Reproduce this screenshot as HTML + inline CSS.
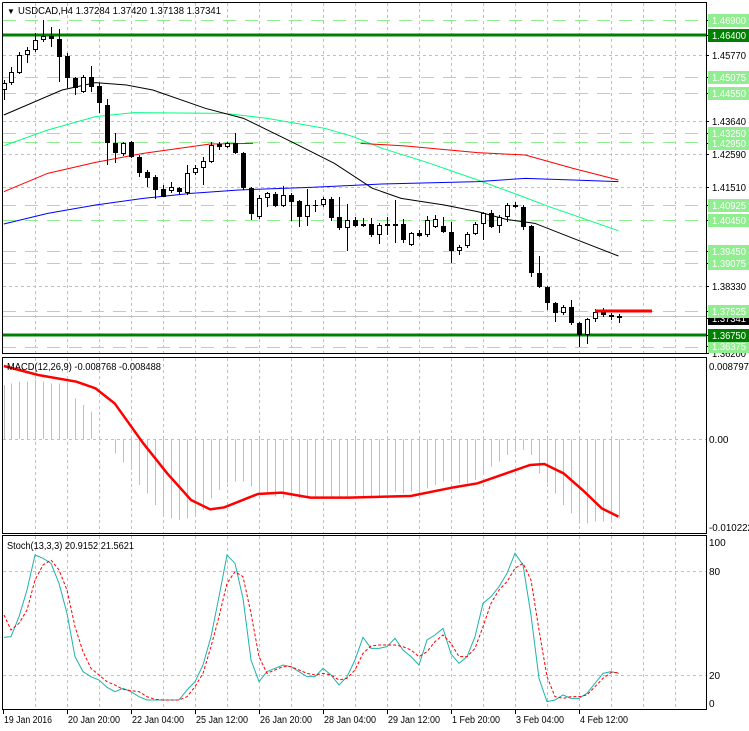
<!DOCTYPE html>
<html><head><meta charset="utf-8"><style>
html,body{margin:0;padding:0;background:#fff;width:749px;height:731px;overflow:hidden}
svg{display:block;font-family:"Liberation Sans",Tahoma,sans-serif;font-size:10px}
</style></head><body>
<svg id="c" width="749" height="731" viewBox="0 0 749 731" xmlns="http://www.w3.org/2000/svg">
<rect width="749" height="731" fill="#fff"/>
<g id="vgrid" stroke="#c0c0c0" stroke-dasharray="3,3" stroke-width="1"></g>
<g id="hgrid"></g>
<g transform="scale(0.47755,0.33333)" fill="none" stroke-width="1" >
<polyline vector-effect="non-scaling-stroke" stroke="#00ff80" stroke-width="1" points="8,437 100,390 200,350 280,338 470,340 560,355 680,385 740,410 800,445 900,490 1000,540 1080,582 1150,620 1295,692"/>
<polyline vector-effect="non-scaling-stroke" stroke="#ff0000" points="8,575 100,520 200,487 300,460 440,432 530,430"/>
<polyline vector-effect="non-scaling-stroke" stroke="#ff0000" points="755,430 850,438 1000,458 1100,465 1200,505 1295,540"/>
<polyline vector-effect="non-scaling-stroke" stroke="#0000ff" points="8,672 100,640 200,615 300,595 400,580 500,570 650,562 800,552 1000,545 1100,535 1200,540 1295,545"/>
<polyline vector-effect="non-scaling-stroke" stroke="#000" points="8,345 130,270 200,248 265,255 320,270 430,325 510,355 610,425 700,490 780,565 840,595 930,615 1000,635 1060,658 1120,670 1200,715 1295,768"/>
</g>
<g id="candles"></g>
<line x1="595" y1="311" x2="652" y2="311" stroke="#ff0000" stroke-width="3"/>
<g id="hist" stroke="#c0c0c0" stroke-width="1"></g>
<g transform="translate(0,350) scale(0.47755,0.33333)" fill="none">
<polyline vector-effect="non-scaling-stroke" stroke="#ff0000" stroke-width="2.5" points="8,48 80,75 160,95 200,115 240,160 300,280 350,370 400,450 440,478 470,472 540,432 590,428 650,443 730,443 860,438 950,412 1000,400 1060,370 1110,345 1140,342 1180,370 1220,420 1260,475 1295,500"/>
<polyline id="stm" vector-effect="non-scaling-stroke" stroke="#20b2aa" stroke-width="1"/>
<polyline id="sts" vector-effect="non-scaling-stroke" stroke="#ff0000" stroke-width="1" stroke-dasharray="3,2"/>
</g>
<g fill="none" stroke="#000" stroke-width="1">
<polyline points="2.5,2.5 706.5,2.5 706.5,353.5 2.5,353.5 2.5,2.5"/>
<rect x="2.5" y="357.5" width="704" height="176"/>
<rect x="2.5" y="535.5" width="704" height="174"/>
</g>
<g id="axis"></g>
<text x="7" y="14" fill="#000" font-size="8">▼</text>
<text x="18" y="14" fill="#000" textLength="203" lengthAdjust="spacingAndGlyphs">USDCAD,H4  1.37284 1.37420 1.37138 1.37341</text>
<text x="7" y="370" fill="#000" textLength="154" lengthAdjust="spacingAndGlyphs">MACD(12,26,9) -0.008768 -0.008488</text>
<text x="7" y="549" fill="#000" textLength="127" lengthAdjust="spacingAndGlyphs">Stoch(13,3,3) 20.9152 21.5621</text>
<g fill="#000">
<text x="709" y="370" textLength="40" lengthAdjust="spacingAndGlyphs">0.008797</text>
<text x="709" y="443">0.00</text>
<text x="709" y="531" textLength="44" lengthAdjust="spacingAndGlyphs">-0.010222</text>
<text x="709" y="546">100</text>
<text x="709" y="575">80</text>
<text x="709" y="679">20</text>
<text x="709" y="707">0</text>
</g>
</svg>
<script>
var NS="http://www.w3.org/2000/svg";
function el(p,t,a){var e=document.createElementNS(NS,t);for(var k in a)e.setAttribute(k,a[k]);p.appendChild(e);return e;}
var vg=document.getElementById('vgrid');
for(var x=35;x<706;x+=32){el(vg,'line',{x1:x+.5,y1:3,x2:x+.5,y2:353});el(vg,'line',{x1:x+.5,y1:358,x2:x+.5,y2:533});el(vg,'line',{x1:x+.5,y1:536,x2:x+.5,y2:709});}
var hg=document.getElementById('hgrid');
[55,121,154,187,286,439,571,675].forEach(function(y){el(hg,'line',{x1:3,y1:y+.5,x2:706,y2:y+.5,stroke:'#c0c0c0','stroke-dasharray':'3,3'});});
el(hg,'line',{x1:3,y1:316.5,x2:706,y2:316.5,stroke:'#c0c0c0'});
[20,77,93,133,142,205,220,251,263,311,347].forEach(function(y){el(hg,'line',{x1:3,y1:y+.5,x2:706,y2:y+.5,stroke:'#90ee90','stroke-width':1,'stroke-dasharray':'13,9'});});
[35,335].forEach(function(y){el(hg,'line',{x1:3,y1:y,x2:706,y2:y,stroke:'#008000','stroke-width':3});});
var C=[[4,'W',83,90,80,100],[11,'W',72,83,67,85],[19,'W',55,73,52,74],[27,'W',50,55,47,63],[35,'W',40,50,33,52],[43,'W',36,40,20,42],[51,'B',36,39,27,47],[59,'B',39,57,29,82],[67,'B',56,78,53,88],[75,'B',78,88,77,95],[83,'W',77,92,75,93],[91,'B',77,87,66,92],[99,'B',86,103,83,113],[107,'B',105,143,99,165],[115,'B',143,153,133,163],[123,'W',143,154,142,156],[131,'B',142,157,141,158],[139,'B',157,173,155,177],[147,'B',172,178,170,187],[155,'B',177,190,175,199],[163,'B',189,197,185,197],[171,'W',187,191,182,193],[179,'B',188,192,187,195],[187,'W',173,193,165,195],[195,'W',168,173,165,175],[203,'W',161,168,157,185],[211,'W',145,162,142,163],[219,'B',144,147,142,150],[227,'W',143,147,142,148],[235,'B',143,153,133,154],[243,'B',153,188,152,190],[251,'B',188,214,187,220],[259,'W',198,217,195,219],[267,'W',193,198,192,207],[275,'B',194,206,192,207],[283,'W',195,206,186,207],[291,'B',195,202,193,221],[299,'B',201,217,200,227],[307,'W',205,217,189,226],[315,'B',205,206,200,212],[323,'W',199,205,197,207],[331,'B',199,218,197,221],[339,'B',217,228,197,230],[347,'W',220,228,204,251],[355,'B',220,226,217,227],[363,'B',224,226,218,227],[371,'B',224,235,218,237],[379,'W',225,235,223,244],[387,'B',224,226,217,235],[395,'B',224,226,200,243],[403,'B',224,240,219,243],[411,'W',233,245,232,246],[419,'B',233,236,230,237],[427,'W',220,235,216,237],[435,'W',219,227,215,228],[443,'B',226,232,217,233],[451,'B',232,251,222,263],[459,'W',247,251,245,255],[467,'W',234,246,232,248],[475,'W',224,234,222,235],[483,'W',213,224,212,240],[491,'B',213,227,210,228],[499,'W',217,226,215,233],[507,'W',205,217,203,222],[515,'B',205,207,202,208],[523,'B',207,227,205,230],[531,'B',226,273,225,277],[539,'B',273,287,256,288],[547,'B',287,303,286,310],[555,'B',303,313,302,322],[563,'W',307,313,305,315],[571,'B',307,323,300,325],[579,'B',323,335,322,347],[587,'W',319,335,318,344],[595,'W',312,319,309,322],[603,'B',312,315,308,317],[611,'B',315,317,313,320],[619,'W',316,318,314,323]];
var cg=document.getElementById('candles');
C.forEach(function(c){var x=c[0]+.5;el(cg,'line',{x1:x,y1:c[4],x2:x,y2:c[5],stroke:'#000'});
var h=Math.max(c[3]-c[2],1);
if(c[1]=='B')el(cg,'rect',{x:c[0]-2,y:c[2],width:5,height:h,fill:'#000'});
else el(cg,'rect',{x:c[0]-1.5,y:c[2]+.5,width:4,height:Math.max(h-1,1),fill:'#fff',stroke:'#000'});});
var H=[105,100,95,95,90,95,100,100,105,145,165,185,268,268,310,338,360,405,430,465,500,505,510,505,500,480,445,420,400,395,395,410,420,430,440,445,445,445,440,445,445,440,440,440,435,440,440,440,435,425,430,425,420,415,405,395,395,400,400,390,375,350,335,315,305,300,315,370,400,430,465,490,520,520,515,515,510,505];
var hh=document.getElementById('hist');
H.forEach(function(v,i){var x=C[i][0]+.5;el(hh,'line',{x1:x,y1:439,x2:x,y2:350+v/3});});
var XS=C.map(function(c){return c[0]/0.47755;});
var SM=[862,860,800,720,615,625,640,700,790,920,965,980,990,1012,1025,1015,1025,1040,1050,1050,1050,1050,1050,1020,995,945,860,740,615,640,745,930,995,965,955,945,950,965,980,980,955,975,1005,980,930,862,895,895,890,865,900,920,945,870,855,835,912,940,920,860,760,740,710,670,610,645,795,985,1055,1050,1035,1045,1045,1030,1000,970,965,970];
var SS=[795,840,820,780,690,645,630,660,720,830,905,955,975,995,1005,1018,1022,1025,1040,1048,1050,1050,1050,1040,1010,970,890,800,700,665,680,790,920,970,960,950,950,960,970,975,970,975,990,985,960,910,888,885,885,885,890,900,920,905,875,855,880,920,920,895,830,760,720,695,655,640,690,840,980,1040,1045,1040,1040,1035,1010,985,968,968];
document.getElementById('stm').setAttribute('points',SM.map(function(v,i){return XS[i]+','+v;}).join(' '));
document.getElementById('sts').setAttribute('points',SS.map(function(v,i){return XS[i]+','+v;}).join(' '));
var ax=document.getElementById('axis');
var L=[[20,'1.46900','L'],[93,'1.44550','L'],[77,'1.45075','L'],[55,'1.45770','P'],[121,'1.43640','P'],[133,'1.43250','L'],[143,'1.42950','L'],[154,'1.42590','P'],[187,'1.41510','P'],[205,'1.40925','L'],[220,'1.40450','L'],[251,'1.39450','L'],[263,'1.39075','L'],[286,'1.38330','P'],[353,'1.36200','P'],[318,'1.37341','K'],[311,'1.37525','L'],[346,'1.36375','L'],[335,'1.36750','D'],[35,'1.46400','D']];
L.forEach(function(l){var y=l[0];el(ax,'line',{x1:706,y1:y+.5,x2:709,y2:y+.5,stroke:'#000'});
var bg=null,fg='#000';if(l[2]=='L'){bg='#90ee90';fg='#fff';}else if(l[2]=='D'){bg='#008000';fg='#fff';}else if(l[2]=='K'){bg='#000';fg='#fff';}
if(bg)el(ax,'rect',{x:708,y:y-6,width:41,height:13,fill:bg});
var t=el(ax,'text',{x:712,y:y+4,fill:fg,textLength:34,lengthAdjust:'spacingAndGlyphs'});t.textContent=l[1];});
var T=['19 Jan 2016','20 Jan 20:00','22 Jan 04:00','25 Jan 12:00','26 Jan 20:00','28 Jan 04:00','29 Jan 12:00','1 Feb 20:00','3 Feb 04:00','4 Feb 12:00'];
var W=[48,52,52,52,52,52,52,48,48,48];
T.forEach(function(s,i){var x=i==0?3:67+64*(i-1);el(ax,'line',{x1:x+.5,y1:710,x2:x+.5,y2:714,stroke:'#000'});var t=el(ax,'text',{x:x+1,y:723,fill:'#000',textLength:W[i],lengthAdjust:'spacingAndGlyphs'});t.textContent=s;});
</script>
</body></html>
